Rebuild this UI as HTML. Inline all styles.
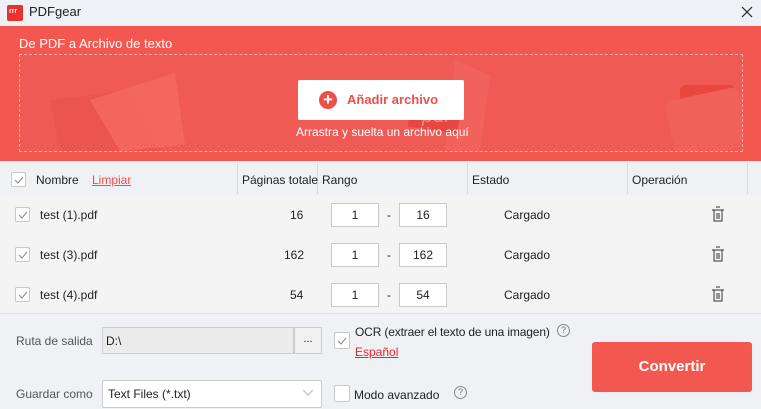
<!DOCTYPE html><html><head><meta charset="utf-8"><style>
*{margin:0;padding:0;box-sizing:border-box}
body{width:761px;height:409px;overflow:hidden;background:#f0f1f5;font-family:"Segoe UI","Liberation Sans",sans-serif;font-size:12px;color:#222;position:relative}
.a{position:absolute}
.cb{position:absolute;width:15px;height:15px;border:1px solid #c8c8cc;background:#fff;border-radius:2px}
.cb svg{position:absolute;left:2px;top:2px}
.sep{position:absolute;top:163px;width:1px;height:31px;background:#d8d8dc}
.inp{position:absolute;background:#fff;border:1px solid #c9c9cc;height:24px;text-align:center;line-height:22px;font-size:12px}
.t{position:absolute;font-size:12px}
</style></head><body>
<div class="a" style="left:0;top:0;width:761px;height:26px;background:#eef1f6"></div>
<div class="a" style="left:7px;top:5px;width:16px;height:16px;background:#e8322d;border-radius:2px"></div>
<div class="a" style="left:9px;top:8px;color:#fff;font-size:7px;font-weight:bold">rrr</div>
<div class="t" style="left:29px;top:4px;font-size:13px">PDFgear</div>
<svg class="a" style="left:741px;top:6px" width="12" height="12"><path d="M1 1L11 11M11 1L1 11" stroke="#222" stroke-width="1.2"/></svg>
<div class="a" style="left:0;top:26px;width:761px;height:135px;background:#f25750"></div>
<div class="t" style="left:19px;top:36px;color:#fff;font-size:13px">De PDF a Archivo de texto</div>
<div class="a" style="left:19px;top:54px;width:724px;height:98px;border:1px dashed #f7aaa5;background:#ef5b54"></div>
<svg class="a" style="left:20px;top:55px" width="722" height="96">
<path d="M30 45L110 35L140 96L40 96Z" fill="#ec554f"/>
<path d="M70 45L155 18L165 90L100 96Z" fill="#f46a62" opacity=".8"/>
<path d="M435 5L470 20L460 96L425 96Z" fill="#f0625b"/>
<rect x="390" y="45" width="50" height="30" fill="#e8463f" transform="rotate(8 414 57)"/>
<text x="402" y="67" fill="#f08a84" font-size="20" font-style="italic" font-family="Liberation Sans">pdf</text>
<rect x="660" y="30" width="55" height="45" rx="6" fill="#e8463f"/>
<rect x="650" y="40" width="75" height="60" rx="8" fill="#f0615a" transform="rotate(-12 680 70)"/>
</svg>
<div class="a" style="left:298px;top:80px;width:166px;height:40px;background:#fff;border-radius:2px"></div>
<div class="a" style="left:319px;top:91px;width:18px;height:18px;border-radius:50%;background:#ef4f49;color:#fff;font-size:17px;line-height:17px;text-align:center;font-weight:bold">+</div>
<div class="t" style="left:347px;top:92px;color:#ef4f49;font-weight:bold;font-size:13px">Añadir archivo</div>
<div class="t" style="left:296px;top:125px;color:#fff">Arrastra y suelta un archivo aquí</div>
<div class="a" style="left:0;top:161px;width:761px;height:34px;background:#f0f1f5"></div>
<div class="a" style="left:0;top:195px;width:761px;height:118px;background:#f4f4f4"></div>
<div class="a" style="left:0;top:313px;width:761px;height:1px;background:#d4e2ee"></div>
<div class="sep" style="left:237px"></div><div class="sep" style="left:317px"></div><div class="sep" style="left:467px"></div><div class="sep" style="left:627px"></div><div class="sep" style="left:747px"></div>
<div class="cb" style="left:11px;top:172px"><svg width="10" height="10"><path d="M1 5L4 8L9 2" stroke="#888" fill="none"/></svg></div>
<div class="t" style="left:36px;top:173px">Nombre</div>
<div class="t" style="left:92px;top:173px;color:#ef4f49;text-decoration:underline">Limpiar</div>
<div class="t" style="left:242px;top:173px">Páginas totale</div>
<div class="t" style="left:322px;top:173px">Rango</div>
<div class="t" style="left:472px;top:173px">Estado</div>
<div class="t" style="left:632px;top:173px">Operación</div>
<div class="cb" style="left:15px;top:207px"><svg width="10" height="10"><path d="M1 5L4 8L9 2" stroke="#888" fill="none"/></svg></div>
<div class="t" style="left:40px;top:208px">test (1).pdf</div><div class="t" style="left:290px;top:208px">16</div>
<div class="inp" style="left:331px;top:203px;width:48px">1</div><div class="t" style="left:387px;top:208px">-</div><div class="inp" style="left:399px;top:203px;width:48px">16</div>
<div class="t" style="left:504px;top:208px">Cargado</div>
<svg class="a" style="left:711px;top:206px" width="14" height="16"><path d="M5 1H9M1 4H13M3 4V15H11V4M6 7V13M8 7V13" stroke="#333" fill="none"/></svg>
<div class="cb" style="left:15px;top:247px"><svg width="10" height="10"><path d="M1 5L4 8L9 2" stroke="#888" fill="none"/></svg></div>
<div class="t" style="left:40px;top:248px">test (3).pdf</div><div class="t" style="left:284px;top:248px">162</div>
<div class="inp" style="left:331px;top:243px;width:48px">1</div><div class="t" style="left:387px;top:248px">-</div><div class="inp" style="left:399px;top:243px;width:48px">162</div>
<div class="t" style="left:504px;top:248px">Cargado</div>
<svg class="a" style="left:711px;top:246px" width="14" height="16"><path d="M5 1H9M1 4H13M3 4V15H11V4M6 7V13M8 7V13" stroke="#333" fill="none"/></svg>
<div class="cb" style="left:15px;top:287px"><svg width="10" height="10"><path d="M1 5L4 8L9 2" stroke="#888" fill="none"/></svg></div>
<div class="t" style="left:40px;top:288px">test (4).pdf</div><div class="t" style="left:290px;top:288px">54</div>
<div class="inp" style="left:331px;top:283px;width:48px">1</div><div class="t" style="left:387px;top:288px">-</div><div class="inp" style="left:399px;top:283px;width:48px">54</div>
<div class="t" style="left:504px;top:288px">Cargado</div>
<svg class="a" style="left:711px;top:286px" width="14" height="16"><path d="M5 1H9M1 4H13M3 4V15H11V4M6 7V13M8 7V13" stroke="#333" fill="none"/></svg>
<div class="t" style="left:16px;top:334px;color:#555">Ruta de salida</div>
<div class="a" style="left:102px;top:327px;width:192px;height:27px;background:#ececec;border:1px solid #ccc"></div>
<div class="t" style="left:106px;top:334px">D:\</div>
<div class="a" style="left:294px;top:327px;width:28px;height:27px;background:#f0f0f0;border:1px solid #ccc;text-align:center;font-size:11px;line-height:22px">...</div>
<div class="cb" style="left:334px;top:332px;width:16px;height:17px"><svg width="10" height="10" style="top:3px"><path d="M1 5L4 8L9 2" stroke="#888" fill="none"/></svg></div>
<div class="t" style="left:355px;top:325px;letter-spacing:-0.15px">OCR (extraer el texto de una imagen)</div>
<div class="a" style="left:557px;top:324px;width:13px;height:13px;border:1px solid #888;border-radius:50%;font-size:9px;text-align:center;line-height:11px;color:#777">?</div>
<div class="t" style="left:355px;top:345px;color:#e8262e;text-decoration:underline">Español</div>
<div class="a" style="left:592px;top:342px;width:160px;height:50px;background:#f25750;border-radius:3px;color:#fff;font-weight:bold;font-size:15px;text-align:center;line-height:50px">Convertir</div>
<div class="t" style="left:16px;top:387px;color:#555">Guardar como</div>
<div class="a" style="left:102px;top:380px;width:220px;height:28px;background:#fff;border:1px solid #ccc;border-radius:2px"></div>
<div class="t" style="left:108px;top:387px">Text Files (*.txt)</div>
<svg class="a" style="left:303px;top:390px" width="10" height="6"><path d="M0 0L5 5L10 0" stroke="#bbb" fill="none"/></svg>
<div class="cb" style="left:334px;top:385px;width:16px;height:17px"></div>
<div class="t" style="left:354px;top:388px">Modo avanzado</div>
<div class="a" style="left:454px;top:386px;width:13px;height:13px;border:1px solid #888;border-radius:50%;font-size:9px;text-align:center;line-height:11px;color:#777">?</div>
</body></html>
